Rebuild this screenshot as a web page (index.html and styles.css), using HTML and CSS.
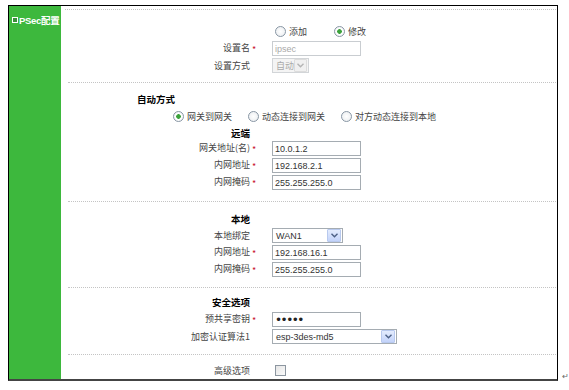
FILE: index.html
```html
<!DOCTYPE html>
<html lang="zh-CN">
<head>
    <meta charset="UTF-8">
    <title>IPSec配置</title>
    <link rel="stylesheet" href="styles.css">
</head>
<body>
    <div class="page">
        <div class="frame">
            <div class="side">
                <div class="side-title"><span class="bullet"></span>PSec配置</div>
            </div>
            <div class="main">
                <div class="dots dots-top"></div>

                <!-- 基本 -->
                <div class="section s1">
                    <div class="row">
                        <span></span>
                        <div class="radios top-radios">
                            <label class="opt"><input type="radio" name="act" class="rd"> 添加</label>
                            <label class="opt"><input type="radio" name="act" class="rd" checked> 修改</label>
                        </div>
                    </div>
                    <div class="row">
                        <span class="lbl">设置名<span class="star">*</span></span>
                        <input class="txt off" value="ipsec" readonly>
                    </div>
                    <div class="row">
                        <span class="lbl">设置方式<span class="star"></span></span>
                        <div class="select sel-mode off"><span class="val">自动</span><span class="arrow"><svg width="7" height="5" viewBox="0 0 7 5"><path d="M0.5 0.8 L3.5 3.8 L6.5 0.8" fill="none" stroke="currentColor" stroke-width="1.4"/></svg></span></div>
                    </div>
                </div>
                <div class="dots"></div>

                <!-- 自动方式 / 远端 -->
                <div class="section s2">
                    <div class="head-left">自动方式</div>
                    <div class="radios mode-radios">
                        <label class="opt"><input type="radio" name="mode" class="rd" checked> 网关到网关</label>
                        <label class="opt"><input type="radio" name="mode" class="rd"> 动态连接到网关</label>
                        <label class="opt"><input type="radio" name="mode" class="rd"> 对方动态连接到本地</label>
                    </div>
                    <div class="row head short">
                        <span class="lbl">远端<span class="star"></span></span>
                    </div>
                    <div class="row">
                        <span class="lbl">网关地址(名)<span class="star">*</span></span>
                        <input class="txt" value="10.0.1.2">
                    </div>
                    <div class="row">
                        <span class="lbl">内网地址<span class="star">*</span></span>
                        <input class="txt" value="192.168.2.1">
                    </div>
                    <div class="row">
                        <span class="lbl">内网掩码<span class="star">*</span></span>
                        <input class="txt" value="255.255.255.0">
                    </div>
                </div>
                <div class="dots"></div>

                <!-- 本地 -->
                <div class="section s3">
                    <div class="row head">
                        <span class="lbl">本地<span class="star"></span></span>
                    </div>
                    <div class="row">
                        <span class="lbl">本地绑定<span class="star"></span></span>
                        <div class="select sel-wan"><span class="val">WAN1</span><span class="arrow"><svg width="7" height="5" viewBox="0 0 7 5"><path d="M0.5 0.8 L3.5 3.8 L6.5 0.8" fill="none" stroke="currentColor" stroke-width="1.4"/></svg></span></div>
                    </div>
                    <div class="row">
                        <span class="lbl">内网地址<span class="star">*</span></span>
                        <input class="txt" value="192.168.16.1">
                    </div>
                    <div class="row">
                        <span class="lbl">内网掩码<span class="star">*</span></span>
                        <input class="txt" value="255.255.255.0">
                    </div>
                </div>
                <div class="dots"></div>

                <!-- 安全选项 -->
                <div class="section s4">
                    <div class="row head">
                        <span class="lbl">安全选项<span class="star"></span></span>
                    </div>
                    <div class="row">
                        <span class="lbl">预共享密钥<span class="star">*</span></span>
                        <input class="txt pwd" type="password" value="12345">
                    </div>
                    <div class="row">
                        <span class="lbl">加密认证算法1<span class="star"></span></span>
                        <div class="select sel-alg"><span class="val">esp-3des-md5</span><span class="arrow"><svg width="7" height="5" viewBox="0 0 7 5"><path d="M0.5 0.8 L3.5 3.8 L6.5 0.8" fill="none" stroke="currentColor" stroke-width="1.4"/></svg></span></div>
                    </div>
                </div>
                <div class="dots"></div>

                <!-- 高级选项 -->
                <div class="section s5">
                    <div class="row">
                        <span class="lbl">高级选项<span class="star"></span></span>
                        <span><input type="checkbox" class="chk"></span>
                    </div>
                </div>
            </div>
        </div>
        <span class="mark">↵</span>
    </div>
</body>
</html>
```

FILE: styles.css
```css
body {
    margin: 0;
    padding: 0;
    background: #fff;
    color: #444;
    font-family: "Noto Sans CJK SC", "Liberation Sans", sans-serif;
    font-size: 9px;
}
.page {
    display: flex;
    align-items: flex-end;
    padding: 5px 0 0 8px;
}
.frame {
    display: flex;
    width: 548px;
    border: 1px solid #000;
    border-bottom: 2px solid #444;
}
.side {
    width: 52px;
    background-color: #3db83d;
    flex-shrink: 0;
}
.side-title {
    display: flex;
    align-items: center;
    padding: 7px 0 0 3px;
    color: #fff;
    font-family: "Liberation Sans", "Noto Sans CJK SC", sans-serif;
    font-size: 9.5px;
    font-weight: bold;
    letter-spacing: -0.3px;
    white-space: nowrap;
}
.bullet {
    flex-shrink: 0;
    width: 4px;
    height: 4px;
    border: 1.5px solid #fff;
    background: #3a8f3a;
    margin-right: 1px;
}
.main {
    flex: 1;
}
.dots {
    height: 0;
    margin: 0 1px 0 7px;
    border-top: 1px dotted #c4c4c4;
}
.dots-top {
    margin: 3px 1px 0 4px;
}
.section.s1 { padding: 13px 0 8px; }
.section.s2 { padding: 8px 0 10px; }
.section.s3 { padding: 8px 0 9px; }
.section.s4 { padding: 5px 0 9px; }
.section.s5 { padding: 7px 0 0; }
.s4 .head { margin-bottom: 1px; }

.row {
    display: grid;
    grid-template-columns: 197px 1fr;
    column-gap: 14px;
    align-items: center;
    height: 17px;
}
.row.short {
    height: 15px;
}
.lbl {
    text-align: right;
    white-space: nowrap;
}
.star {
    display: inline-block;
    width: 8px;
    text-align: center;
    color: #c8102e;
    font-size: 9px;
    vertical-align: -2px;
}
.head .lbl,
.head-left {
    color: #000;
    font-weight: bold;
    font-size: 9.5px;
}
.head-left {
    height: 17px;
    line-height: 17px;
    padding-left: 76px;
}
.radios {
    display: flex;
    align-items: center;
    height: 17px;
}
.top-radios {
    gap: 27px;
    padding-left: 3px;
}
.mode-radios {
    gap: 16px;
    padding-left: 112px;
}
.opt {
    display: flex;
    align-items: center;
    gap: 3px;
    white-space: nowrap;
}
.rd {
    appearance: none;
    -webkit-appearance: none;
    width: 11px;
    height: 11px;
    margin: 0;
    border: 1px solid #8896a4;
    border-radius: 50%;
    background: radial-gradient(circle, #fff 0, #e8ebee 100%);
}
.rd:checked {
    background: radial-gradient(circle, #3ca23c 0, #3ca23c 2px, #fff 2.6px, #eef0f2 100%);
}
.chk {
    appearance: none;
    -webkit-appearance: none;
    display: block;
    width: 11px;
    height: 11px;
    margin: 0 0 0 3px;
    border: 1px solid #8c96a0;
    background: linear-gradient(135deg, #e6e6e6, #fafafa);
}
.txt {
    box-sizing: border-box;
    width: 89px;
    height: 15px;
    margin: 0;
    padding: 0 2px;
    border: 1px solid #a5acb2;
    font-family: "Liberation Sans", sans-serif;
    font-size: 9px;
    color: #333;
    background: #fff;
}
.txt.off {
    color: #a9a9a9;
    border-color: #c9cdd1;
}
.txt.pwd {
    font-family: "DejaVu Sans", sans-serif;
    font-size: 12px;
    letter-spacing: -1.5px;
    color: #222;
}
.select {
    box-sizing: border-box;
    display: flex;
    align-items: center;
    height: 15px;
    border: 1px solid #a5acb2;
    background: #fff;
    font-family: "Liberation Sans", sans-serif;
    font-size: 9px;
    color: #333;
}
.select .val {
    flex: 1;
    padding-left: 3px;
    white-space: nowrap;
}
.select .arrow {
    display: flex;
    align-items: center;
    justify-content: center;
    width: 12px;
    height: 11px;
    margin-right: 1px;
    border: 1px solid #b8c9ee;
    border-radius: 1px;
    background: linear-gradient(#e4ecfd, #c3d3fa);
    color: #4d6185;
}
.sel-mode { width: 37px; }
.sel-wan { width: 71px; }
.sel-alg { width: 125px; }
.select.off {
    color: #a9a9a9;
    border-color: #d2d5d8;
    background: #f4f4f4;
}
.select.off .arrow {
    border-color: #dcdcdc;
    background: #f0f0f0;
    color: #b4b4b4;
}
.mark {
    margin: 0 0 1px 4px;
    font-size: 8px;
    color: #666;
    line-height: 8px;
}
```
